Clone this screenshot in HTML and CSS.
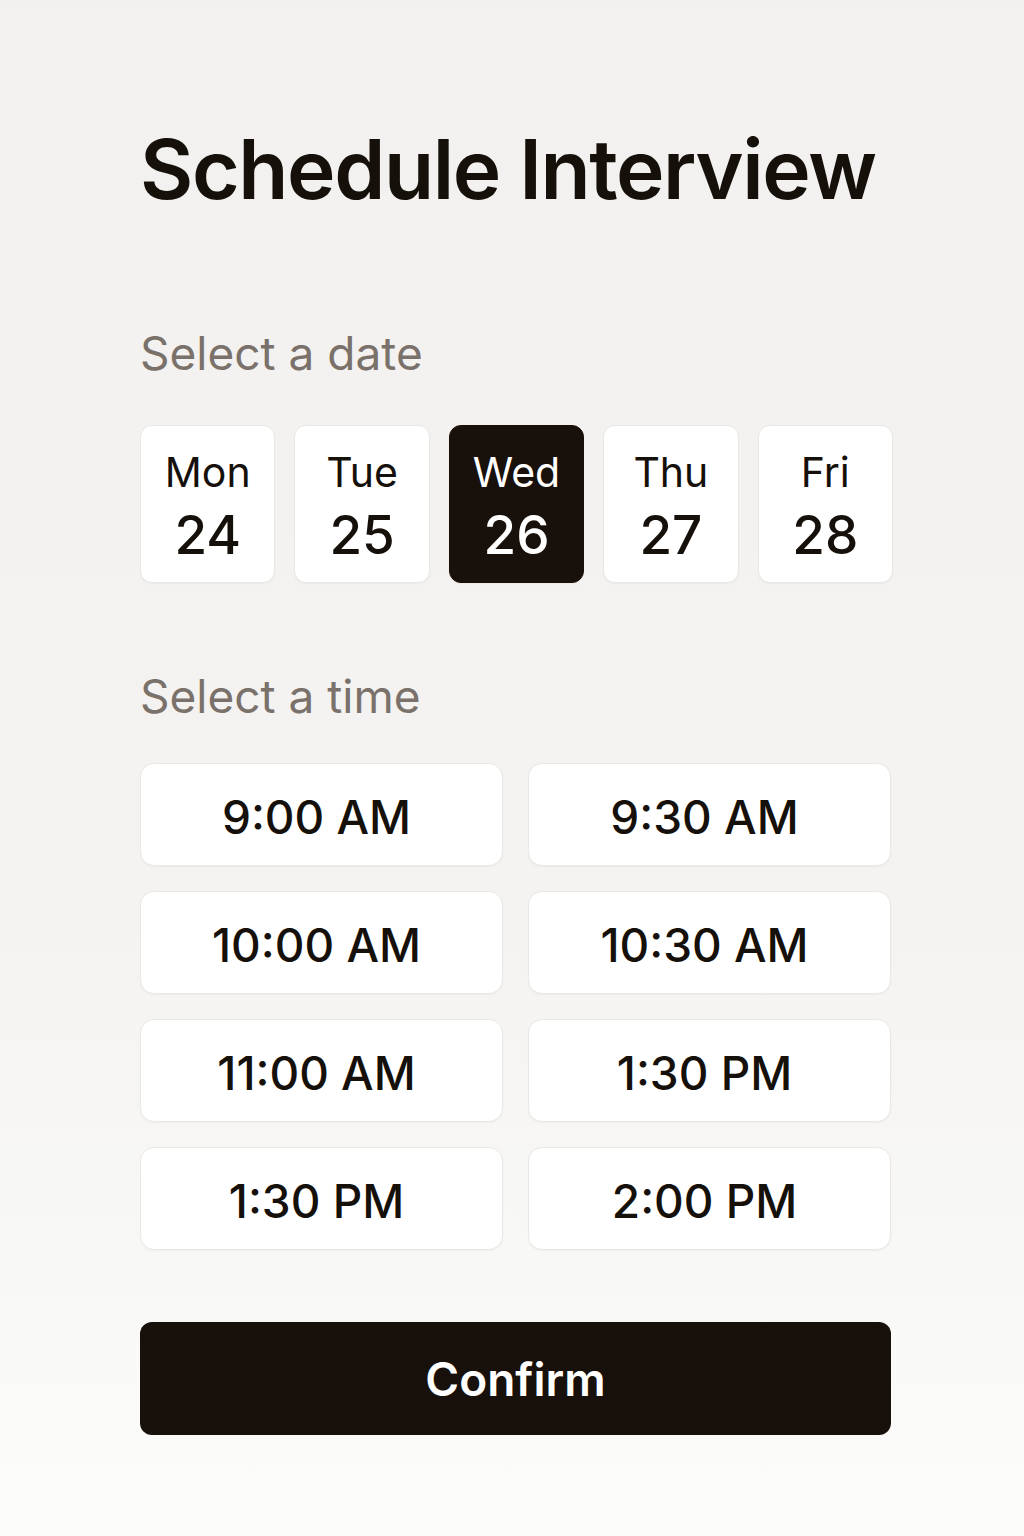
FILE: index.html
```html
<!DOCTYPE html>
<html lang="en">
<head>
  <meta charset="UTF-8" />
  <title>Schedule Interview</title>
  <link rel="stylesheet" href="styles.css">
</head>
<body>
  <main class="scheduler">
    <h1 class="title">Schedule Interview</h1>

    <h2 class="section-label">Select a date</h2>
    <div class="dates">
      <button class="date-card"><span class="day">Mon</span><span class="num">24</span></button>
      <button class="date-card"><span class="day">Tue</span><span class="num">25</span></button>
      <button class="date-card is-active"><span class="day">Wed</span><span class="num">26</span></button>
      <button class="date-card"><span class="day">Thu</span><span class="num">27</span></button>
      <button class="date-card"><span class="day">Fri</span><span class="num">28</span></button>
    </div>

    <h2 class="section-label label-time">Select a time</h2>
    <div class="times">
      <button class="time-slot">9:00 AM</button>
      <button class="time-slot">9:30 AM</button>
      <button class="time-slot">10:00 AM</button>
      <button class="time-slot">10:30 AM</button>
      <button class="time-slot">11:00 AM</button>
      <button class="time-slot">1:30 PM</button>
      <button class="time-slot">1:30 PM</button>
      <button class="time-slot">2:00 PM</button>
    </div>

    <button class="confirm">Confirm</button>
  </main>
</body>
</html>
```

FILE: styles.css
```css
/* Base */
html, body {
  margin: 0;
  padding: 0;
}

body {
  min-height: 1536px;
  background: linear-gradient(to bottom, #f2f1ef 0%, #f4f3f1 60%, #fcfcfb 100%);
  font-family: Inter, "Noto Sans", sans-serif;
  color: #16100a;
}

.scheduler {
  width: 753px;
  margin: 0 auto 0 140px;
  padding-top: 129px;
  display: flex;
  flex-direction: column;
}

.title {
  margin: 0;
  font-size: 82px;
  line-height: 1;
  font-weight: 600;
  letter-spacing: -1.4px;
}

.section-label {
  margin: 119px 0 49px 0;
  font-size: 46px;
  line-height: 1;
  font-weight: 400;
  color: #7a716b;
}

.label-time {
  margin-top: 90px;
  margin-bottom: 44px;
}

/* Dates */
.dates {
  display: grid;
  grid-template-columns: repeat(5, 1fr);
  gap: 19px;
}

.date-card {
  height: 158px;
  border: 1px solid #ebe8e4;
  border-radius: 12px;
  background: #fff;
  box-shadow: 0 1px 2px rgba(0,0,0,0.04);
  display: flex;
  flex-direction: column;
  align-items: center;
  justify-content: center;
  gap: 13px;
  padding: 8px 0 0 0;
  font-family: inherit;
  color: #16100a;
  cursor: pointer;
}

.date-card .day {
  font-size: 41px;
  line-height: 1;
  font-weight: 400;
}

.date-card .num {
  font-size: 53px;
  line-height: 1.1;
  font-weight: 500;
}

.date-card.is-active {
  background: #18100a;
  border-color: #18100a;
  color: #fff;
}

/* Times */
.times {
  display: grid;
  grid-template-columns: 1fr 1fr;
  gap: 25px;
  margin-right: 2px;
}

.time-slot {
  height: 103px;
  border: 1px solid #ebe8e4;
  border-radius: 14px;
  background: #fff;
  box-shadow: 0 1px 2px rgba(0,0,0,0.04);
  font-family: inherit;
  font-size: 46px;
  font-weight: 450;
  color: #16100a;
  padding: 4px 10px 0 0;
  cursor: pointer;
}

/* Confirm */
.confirm {
  margin-top: 72px;
  margin-right: 2px;
  height: 113px;
  border: none;
  border-radius: 12px;
  background: #18100a;
  color: #fff;
  font-family: inherit;
  font-size: 46px;
  font-weight: 600;
  cursor: pointer;
}
```
